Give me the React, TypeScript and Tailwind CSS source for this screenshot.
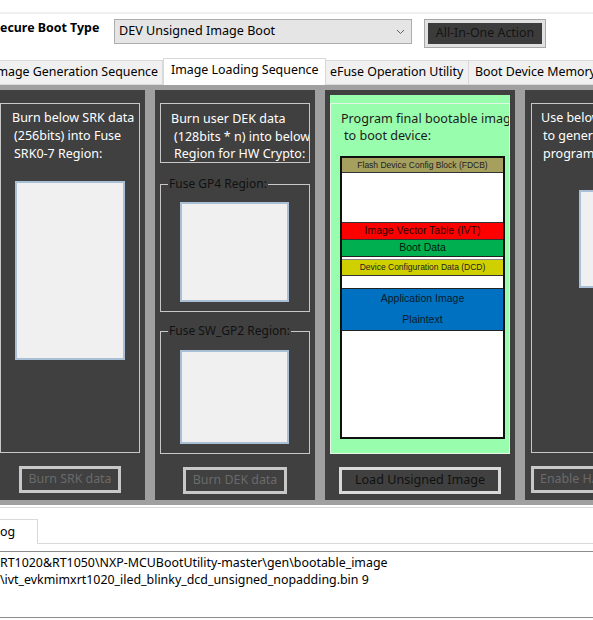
import React from "react";

const UI = "font-['Noto_Sans','Open_Sans','Liberation_Sans',sans-serif]";
const AR = "font-['Liberation_Sans',Arial,sans-serif]";

function TextBox({ className }: { className: string }) {
  return <div className={`bg-[#f0f0f0] border-2 border-[#a9bfd6] shrink-0 ${className}`} />;
}

export default function App() {
  return (
    <div className={`w-[593px] h-[620px] overflow-hidden bg-white relative ${UI}`}>
      {/* header */}
      <div className="h-[12px]" />
      <div className="h-[2px] bg-[#f0f0f0]" />
      <div className="h-[44px] flex items-start pt-[5px]">
        <div className="w-[114px] shrink-0 text-[12.4px] font-bold leading-[16px] text-black whitespace-nowrap pt-[1px]">
          ecure Boot Type
        </div>
        <div className="w-[298px] h-[25px] shrink-0 border border-[#adadad] bg-[#e5e5e5] flex items-center pl-[4px] pr-[6px]">
          <span className="text-[12.6px] text-black leading-none flex-1 whitespace-nowrap">DEV Unsigned Image Boot</span>
          <svg width="9" height="6" viewBox="0 0 9 6" className="shrink-0">
            <polyline points="1,1 4.5,4.5 8,1" fill="none" stroke="#606060" strokeWidth="1" />
          </svg>
        </div>
        <div className="ml-[12px] w-[122px] h-[29px] shrink-0 border border-[#a8a8a8] bg-[#e1e1e1] p-[3px]">
          <div className="w-full h-full bg-[#3c3c3c] flex items-center justify-center text-[12.4px] text-[#141414] whitespace-nowrap">
            All-In-One Action
          </div>
        </div>
      </div>

      {/* tabs */}
      <div className="h-[27px] flex items-end text-[12.4px] text-black whitespace-nowrap">
        <div className="w-[163px] h-[25px] shrink-0 bg-[#f0f0f0] border-t border-r border-b border-[#d9d9d9] flex items-center justify-end pr-[4px] pb-[1px] overflow-hidden">
          mage Generation Sequence
        </div>
        <div className="w-[163px] h-[27px] shrink-0 bg-white border-t border-l border-r border-[#d9d9d9] flex items-center pl-[7px] pb-[3px]">
          Image Loading Sequence
        </div>
        <div className="w-[143px] h-[25px] shrink-0 bg-[#f0f0f0] border-t border-r border-b border-[#d9d9d9] flex items-center pl-[4px] pb-[1px]">
          eFuse Operation Utility
        </div>
        <div className="flex-1 h-[25px] bg-[#f0f0f0] border-t border-b border-[#d9d9d9] flex items-center pl-[6px] pb-[1px] overflow-hidden">
          Boot Device Memory
        </div>
      </div>

      {/* panels */}
      <div className="h-[420px] bg-[#a0a0a0] pt-[5px] overflow-hidden">
        <div className="flex gap-[10px] ml-[-5px]">
          {/* panel 1 */}
          <div className="w-[150px] h-[410px] shrink-0 bg-[#404040] flex flex-col px-[5px] pt-[13px]">
            <div className="w-[140px] h-[350px] border border-[#c8c8c8] pt-[5px] flex flex-col text-[12.5px] leading-[18px] text-white whitespace-nowrap overflow-hidden">
              <div className="pl-[11px]">Burn below SRK data</div>
              <div className="pl-[13px]">(256bits) into Fuse</div>
              <div className="pl-[13px]">SRK0-7 Region:</div>
              <TextBox className="mx-auto mt-[18px] w-[110px] h-[179px]" />
            </div>
            <div className="mx-auto mt-[13px] w-[102px] h-[27px] border-[3px] border-[#c8c8c8] flex items-center justify-center text-[12.4px] text-[#6a6a6a] whitespace-nowrap">
              Burn SRK data
            </div>
          </div>

          {/* panel 2 */}
          <div className="w-[160px] h-[410px] shrink-0 bg-[#404040] flex flex-col px-[5px] pt-[13px]">
            <div className="w-[150px] h-[60px] shrink-0 border border-[#c8c8c8] pt-[6px] text-[12.5px] leading-[17.5px] text-white whitespace-nowrap overflow-hidden">
              <div className="pl-[10px]">Burn user DEK data</div>
              <div className="pl-[13px]">(128bits * n) into below</div>
              <div className="pl-[13px]">Region for HW Crypto:</div>
            </div>
            <div className="relative mt-[21px] w-[150px] h-[128px] shrink-0 border border-[#c8c8c8] pt-[17px] pl-[19px]">
              <div className="absolute left-[7px] top-[-10px] px-[1px] bg-[#404040] text-[12px] leading-[18px] text-[#111] whitespace-nowrap">
                Fuse GP4 Region:
              </div>
              <TextBox className="w-[109px] h-[100px]" />
            </div>
            <div className="relative mt-[19px] w-[150px] h-[123px] shrink-0 border border-[#c8c8c8] pt-[18px] pl-[19px]">
              <div className="absolute left-[7px] top-[-10px] px-[1px] bg-[#404040] text-[12px] leading-[18px] text-[#111] whitespace-nowrap">
                Fuse SW_GP2 Region:
              </div>
              <TextBox className="w-[109px] h-[94px]" />
            </div>
            <div className="mx-auto mt-[13px] w-[104px] h-[27px] border-[3px] border-[#c8c8c8] flex items-center justify-center text-[12.4px] text-[#6a6a6a] whitespace-nowrap">
              Burn DEK data
            </div>
          </div>

          {/* panel 3 */}
          <div className="w-[190px] h-[410px] shrink-0 bg-[#404040] flex flex-col px-[5px] pt-[5px]">
            <div className="w-[180px] h-[359px] shrink-0 bg-[#99fdae] pt-[8px]">
              <div className="w-[180px] h-[351px] border border-[#e4f4e6] pt-[6px] overflow-hidden">
                <div className="text-[12.6px] leading-[17px] text-[#1c1c1c] whitespace-nowrap">
                  <div className="pl-[10px]">Program final bootable image</div>
                  <div className="pl-[13px]">to boot device:</div>
                </div>
                <div className={`ml-[9px] mt-[12px] w-[165px] h-[283px] border-2 border-[#111] bg-white flex flex-col ${AR}`}>
                  <div className="h-[15px] shrink-0 bg-[#a6a05e] border-b border-[#333] flex items-center justify-center text-[8.5px] text-[#222] whitespace-nowrap">
                    Flash Device Config Block (FDCB)
                  </div>
                  <div className="h-[49px] shrink-0" />
                  <div className="h-[18px] shrink-0 bg-[#ff0000] border-y border-[#333] flex items-center justify-center text-[10.5px] text-[#2a0000] whitespace-nowrap">
                    Image Vector Table (IVT)
                  </div>
                  <div className="h-[17px] shrink-0 bg-[#00b050] border-b border-[#222] flex items-center justify-center text-[10.5px] text-[#001a0a] whitespace-nowrap">
                    Boot Data
                  </div>
                  <div className="h-[3px] shrink-0 border-b border-[#888]" />
                  <div className="h-[16px] shrink-0 bg-[#d0d000] border-b border-[#333] flex items-center justify-center text-[8.5px] text-[#222] whitespace-nowrap">
                    Device Configuration Data (DCD)
                  </div>
                  <div className="h-[12px] shrink-0" />
                  <div className="h-[43px] shrink-0 bg-[#0070c0] border-y border-[#222] flex flex-col items-center justify-between py-[2px] text-[10.5px] text-[#0a1a2e] whitespace-nowrap">
                    <span>Application Image</span>
                    <span>Plaintext</span>
                  </div>
                  <div className="flex-1" />
                </div>
              </div>
            </div>
            <div className="mx-auto mt-[13px] w-[162px] h-[27px] border-[3px] border-[#d9d9d9] flex items-center justify-center text-[12.6px] text-[#111] whitespace-nowrap">
              Load Unsigned Image
            </div>
          </div>

          {/* panel 4 */}
          <div className="w-[180px] h-[410px] shrink-0 bg-[#404040] flex flex-col pl-[6px] pt-[13px]">
            <div className="w-[160px] h-[350px] border border-[#c8c8c8] pt-[5px] flex flex-col text-[12.5px] leading-[18px] text-white whitespace-nowrap overflow-hidden">
              <div className="pl-[9px]">Use below DEK data</div>
              <div className="pl-[11px]">to generate KeyBlob</div>
              <div className="pl-[11px]">program</div>
              <TextBox className="ml-[47px] mt-[27px] w-[110px] h-[98px]" />
            </div>
            <div className="mt-[13px] w-[150px] h-[27px] border-[3px] border-[#c8c8c8] flex items-center pl-[6px] text-[12.4px] text-[#6a6a6a] whitespace-nowrap">
              Enable HAB
            </div>
          </div>
        </div>
      </div>

      {/* log area */}
      <div className="h-[2px]" />
      <div className="h-[1px] bg-[#dadada]" />
      <div className="h-[11px]" />
      <div className="h-[25px] flex">
        <div className="w-[38px] shrink-0 border-t border-r border-[#d9d9d9] bg-white flex items-center text-[12.4px] text-black">
          og
        </div>
        <div className="flex-1 border-b border-[#d9d9d9]" />
      </div>
      <div className="h-[7px]" />
      <div className="h-[67px] border-t border-b border-[#8c8c8c] pt-[2px] text-[12.4px] leading-[17px] text-black whitespace-nowrap">
        <div>RT1020&amp;RT1050\NXP-MCUBootUtility-master\gen\bootable_image</div>
        <div>\ivt_evkmimxrt1020_iled_blinky_dcd_unsigned_nopadding.bin 9</div>
      </div>
    </div>
  );
}
